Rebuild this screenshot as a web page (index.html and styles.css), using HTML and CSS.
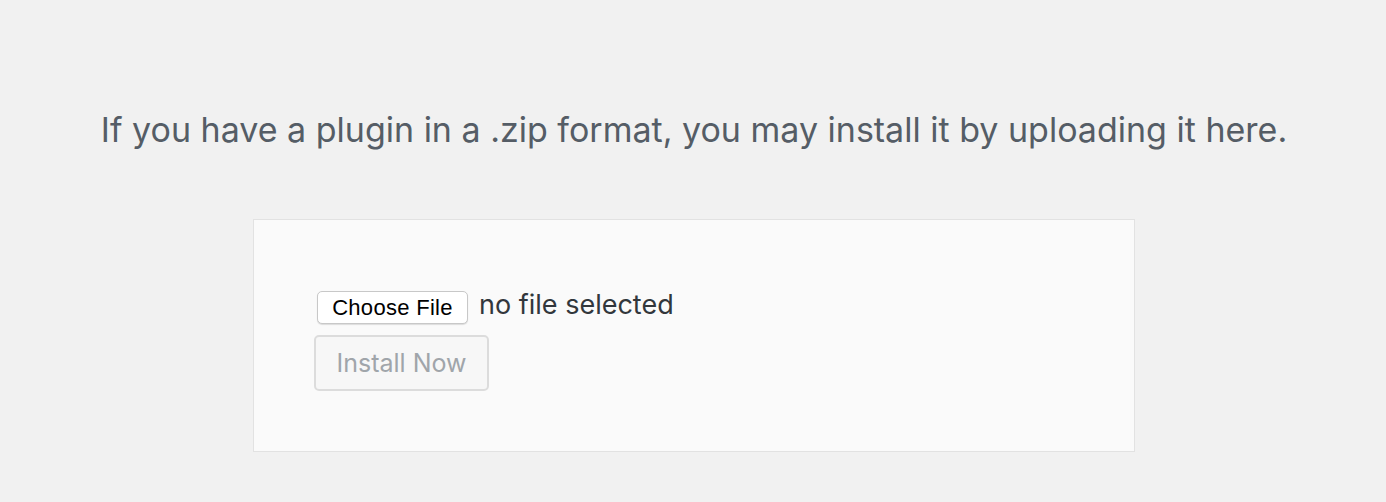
FILE: index.html
```html
<!DOCTYPE html>
<html>
<head>
<meta charset="utf-8">
<link rel="stylesheet" href="styles.css">
</head>
<body>
<div class="upload-plugin">
  <p class="install-help">If you have a plugin in a .zip format, you may install it by uploading it here.</p>
  <form class="upload-form">
    <div class="file-row">
      <span class="choose-btn">Choose File</span>
      <span class="file-name">no file selected</span>
    </div>
    <span class="install-btn">Install Now</span>
  </form>
</div>
</body>
</html>
```
FILE: styles.css
```css
html, body {
  margin: 0;
  padding: 0;
  background: #f1f1f1;
}
body {
  font-family: Inter, "Noto Sans", sans-serif;
  width: 1386px;
  height: 502px;
  overflow: hidden;
}
.upload-plugin {
  display: flex;
  flex-direction: column;
  align-items: center;
  padding-top: 108px;
}
.install-help {
  margin: 0 0 0 2px;
  font-size: 34px;
  line-height: 44px;
  color: #555d66;
  text-align: center;
  white-space: nowrap;
}
.upload-form {
  margin: 67px 0 0 2px;
  width: 820px;
  height: 160px;
  padding: 71px 0 0 60px;
  background: #fafafa;
  border: 1px solid #e2e2e2;
  display: flex;
  flex-direction: column;
  align-items: flex-start;
}
.file-row {
  display: flex;
  align-items: center;
  margin-left: 3px;
  gap: 11px;
}
.choose-btn {
  box-sizing: border-box;
  width: 151px;
  height: 33px;
  display: flex;
  align-items: center;
  justify-content: center;
  background: #fff;
  border: 1px solid #c8c8c8;
  border-radius: 5px;
  box-shadow: 0 1px 1px rgba(0,0,0,0.12);
  font-family: "Liberation Sans", Arial, sans-serif;
  font-size: 22px;
  letter-spacing: 0.3px;
  color: #000;
}
.file-name {
  font-size: 27px;
  color: #32373c;
  margin-top: -6px;
}
.install-btn {
  box-sizing: border-box;
  margin-top: 11px;
  width: 175px;
  height: 56px;
  display: flex;
  align-items: center;
  justify-content: center;
  background: #f7f7f7;
  border: 2px solid #dcdcdc;
  border-radius: 5px;
  font-size: 25px;
  color: #a0a5aa;
}
```
